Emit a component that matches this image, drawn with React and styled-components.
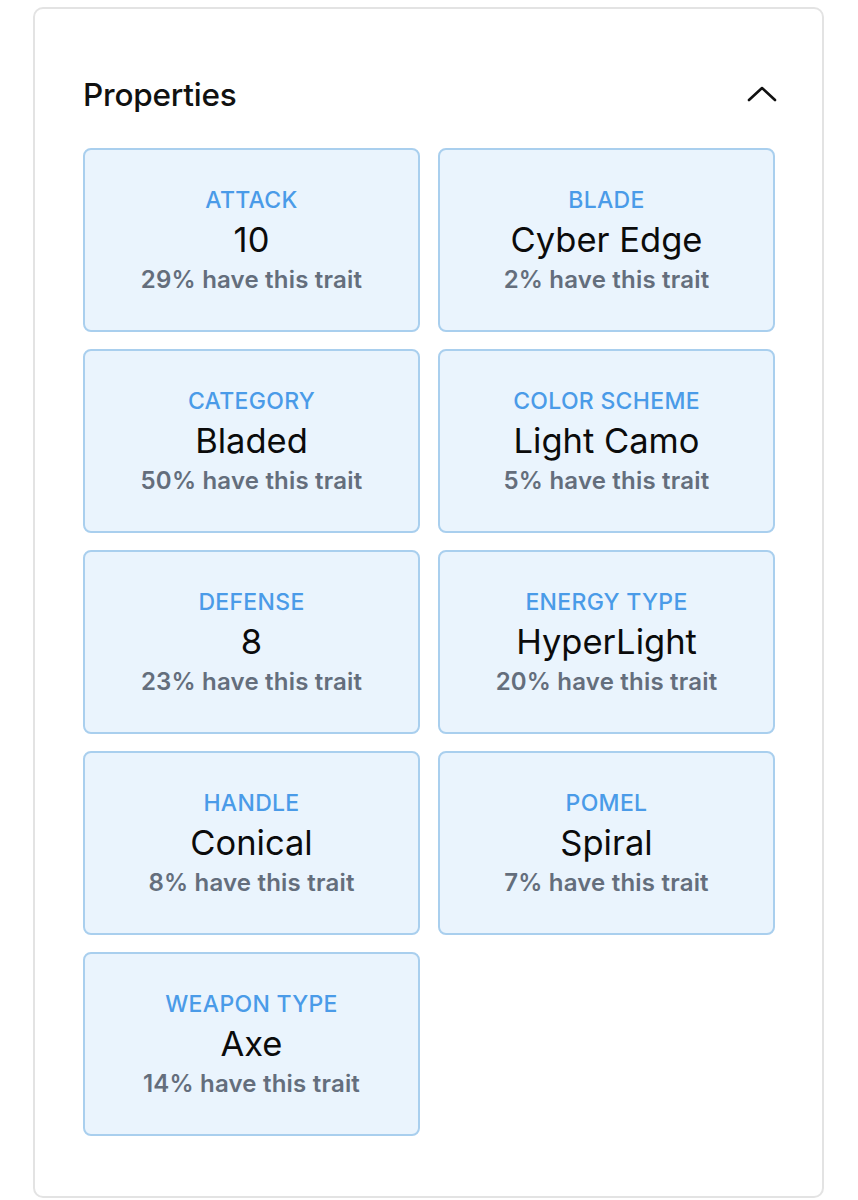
import React from "react";
import styled, { createGlobalStyle } from "styled-components";

const GlobalStyle = createGlobalStyle`
  html, body {
    margin: 0;
    padding: 0;
    background: #ffffff;
  }
  body {
    font-family: Inter, "Noto Sans", "Liberation Sans", sans-serif;
    -webkit-font-smoothing: antialiased;
  }
`;

const traits = [
  { type: "ATTACK", value: "10", pct: 29 },
  { type: "BLADE", value: "Cyber Edge", pct: 2 },
  { type: "CATEGORY", value: "Bladed", pct: 50 },
  { type: "COLOR SCHEME", value: "Light Camo", pct: 5 },
  { type: "DEFENSE", value: "8", pct: 23 },
  { type: "ENERGY TYPE", value: "HyperLight", pct: 20 },
  { type: "HANDLE", value: "Conical", pct: 8 },
  { type: "POMEL", value: "Spiral", pct: 7 },
  { type: "WEAPON TYPE", value: "Axe", pct: 14 },
];

const ChevronUp = () => (
  <svg width="30" height="20" viewBox="0 0 30 20" fill="none">
    <path
      d="M2 16 L15 4 L28 16"
      stroke="#111"
      strokeWidth="2.6"
      strokeLinecap="round"
      strokeLinejoin="round"
    />
  </svg>
);

const App = () => {
  return (
    <Page>
      <GlobalStyle />
      <Panel>
        <Header>
          <Title>Properties</Title>
          <Toggle aria-label="collapse">
            <ChevronUp />
          </Toggle>
        </Header>
        <Grid>
          {traits.map((t) => (
            <TraitCard key={t.type}>
              <TraitType>{t.type}</TraitType>
              <TraitValue>{t.value}</TraitValue>
              <TraitRarity>{t.pct}% have this trait</TraitRarity>
            </TraitCard>
          ))}
        </Grid>
      </Panel>
    </Page>
  );
};

export default App;

const Page = styled.div`
  width: 858px;
  height: 1200px;
  padding: 7px 0 0 33px;
  box-sizing: border-box;
  overflow: hidden;
`;

const Panel = styled.section`
  width: 791px;
  height: 1191px;
  box-sizing: border-box;
  border: 2px solid #e3e3e3;
  border-radius: 10px;
  padding: 54px 47px 0 48px;
`;

const Header = styled.div`
  display: flex;
  align-items: center;
  justify-content: space-between;
  height: 62px;
  margin-bottom: 23px;
`;

const Title = styled.h2`
  margin: 0;
  font-size: 31.5px;
  font-weight: 500;
  color: #111;
  letter-spacing: -0.2px;
`;

const Toggle = styled.button`
  border: none;
  background: none;
  padding: 0;
  display: flex;
  margin-right: -2px;
  cursor: pointer;
`;

const Grid = styled.div`
  display: grid;
  grid-template-columns: repeat(2, 337px);
  grid-auto-rows: 184px;
  gap: 17px 18px;
`;

const TraitCard = styled.div`
  box-sizing: border-box;
  background: #eaf4fd;
  border: 2px solid #a9cfee;
  border-radius: 8px;
  display: flex;
  flex-direction: column;
  align-items: center;
  justify-content: center;
  text-align: center;
`;

const TraitType = styled.div`
  font-size: 23px;
  font-weight: 500;
  color: #4a9be8;
  letter-spacing: 0.3px;
  line-height: 32px;
`;

const TraitValue = styled.div`
  font-size: 34.5px;
  font-weight: 400;
  color: #0b0b0b;
  line-height: 48px;
`;

const TraitRarity = styled.div`
  font-size: 24px;
  font-weight: 600;
  color: #646e7c;
  line-height: 32px;
  letter-spacing: 0.2px;
`;
